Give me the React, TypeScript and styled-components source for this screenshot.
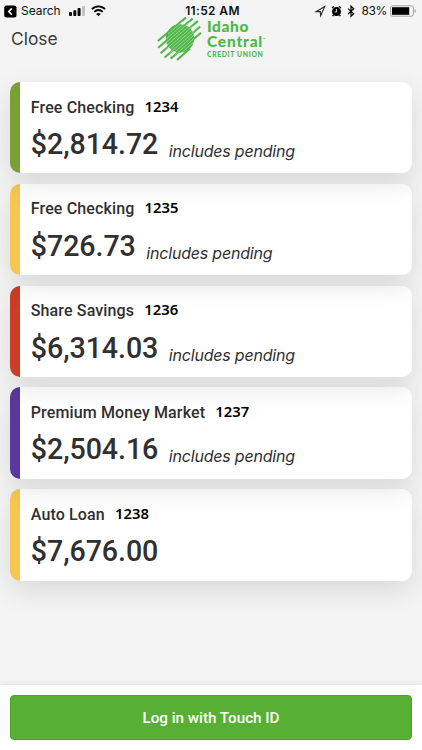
import React from 'react';
import styled, { createGlobalStyle } from 'styled-components';

const GlobalStyle = createGlobalStyle`
  * {
    box-sizing: border-box;
  }
  body {
    margin: 0;
    background: #f4f4f4;
    color: #303030;
    font-family: Roboto, sans-serif;
  }
`;

const Screen = styled.div`
  display: flex;
  flex-direction: column;
  width: 422px;
  height: 750px;
  overflow: hidden;
`;

const StatusBar = styled.div`
  display: grid;
  grid-template-columns: 1fr auto 1fr;
  align-items: center;
  height: 21px;
  padding: 1px 6px 0 4px;
  color: #111;
  font-family: Inter, sans-serif;
  font-size: 12px;
  line-height: 20px;
`;

const StatusGroup = styled.div<{ $end?: boolean }>`
  display: flex;
  align-items: center;
  justify-content: ${(p) => (p.$end ? 'flex-end' : 'flex-start')};
`;

const StatusText = styled.span<{ $left?: number; $spacing?: number }>`
  margin-left: ${(p) => p.$left || 0}px;
  letter-spacing: ${(p) => p.$spacing || 0}px;
`;

const Clock = styled.span`
  margin-left: 5px;
  font-weight: 600;
  letter-spacing: 0.35px;
`;

const Icon = styled.svg<{ $left?: number }>`
  display: block;
  flex: none;
  margin-left: ${(p) => p.$left || 0}px;
`;

const Header = styled.header`
  display: grid;
  grid-template-columns: 146px 118px 1fr;
  height: 61px;
  padding-left: 11px;
`;

const Close = styled.a`
  padding-top: 7px;
  color: #3c3c3c;
  font-family: Inter, sans-serif;
  font-size: 17.4px;
  line-height: 22px;
`;

const Logo = styled.div`
  display: flex;
  height: 48px;
  margin-top: -5px;
  color: #4db748;
`;

const Brand = styled.div`
  padding-top: 3px;
  margin-left: 5px;
  font-family: Lato, sans-serif;
  font-size: 15.5px;
  font-weight: 900;
  line-height: 14.5px;
  white-space: nowrap;
`;

const BrandLine = styled.div<{ $spacing: number }>`
  letter-spacing: ${(p) => p.$spacing}px;
`;

const Tagline = styled.div`
  margin-top: 2px;
  font-size: 6.8px;
  font-weight: 900;
  line-height: 9px;
  letter-spacing: 0.65px;
`;

const Mark = styled.sup`
  font-size: 3px;
  line-height: 0;
  vertical-align: 7px;
`;

const Accounts = styled.main`
  display: flex;
  flex: 1;
  flex-direction: column;
  gap: 10.4px;
  padding: 0 10.4px;
`;

// every card drops its shadow over the card below it
const Card = styled.section<{ $color: string; $level: number }>`
  position: relative;
  z-index: ${(p) => p.$level};
  display: flex;
  flex: none;
  height: 91.4px;
  border-radius: 10px;
  background: linear-gradient(to right, ${(p) => p.$color} 10.4px, #fff 10.4px);
  box-shadow: 0 10px 28px rgba(0, 0, 0, 0.11);
`;

const CardBody = styled.div`
  padding: 13.5px 0 0 20.4px;
`;

const Title = styled.div`
  display: flex;
  align-items: baseline;
  height: 22px;
  line-height: 22px;
`;

const Name = styled.span`
  font-size: 16px;
  font-weight: 500;
  letter-spacing: 0.13px;
`;

const AccountNumber = styled.span`
  position: relative;
  top: -1px;
  margin-left: 10.2px;
  color: #000;
  font-family: 'Noto Sans', sans-serif;
  font-size: 14.8px;
  font-weight: 600;
`;

const Balance = styled.div`
  display: flex;
  align-items: baseline;
  margin-top: 8.5px;
  line-height: 36px;
`;

const Amount = styled.span`
  font-size: 28.6px;
  font-weight: 500;
  letter-spacing: -0.07px;
`;

const Pending = styled.span`
  position: relative;
  top: 3px;
  margin-left: 10.6px;
  font-family: Inter, sans-serif;
  font-size: 16px;
  font-style: italic;
  letter-spacing: -0.2px;
`;

const Footer = styled.footer`
  position: relative;
  z-index: 10;
  height: 65px;
  padding: 10px 10.4px;
  background: #fff;
  box-shadow: 0 0 7px rgba(0, 0, 0, 0.1);
`;

const LoginButton = styled.button`
  display: block;
  width: 100%;
  height: 45px;
  padding: 0;
  border: 1px solid #4ca22d;
  border-radius: 4px;
  background: #57b033;
  color: #fff;
  font-family: Roboto, sans-serif;
  font-size: 15.2px;
  font-weight: 500;
`;

const accounts = [
  { name: 'Free Checking', number: '1234', amount: '$2,814.72', color: '#7a9f35', pending: true },
  { name: 'Free Checking', number: '1235', amount: '$726.73', color: '#f6c750', pending: true },
  { name: 'Share Savings', number: '1236', amount: '$6,314.03', color: '#cb3d27', pending: true },
  { name: 'Premium Money Market', number: '1237', amount: '$2,504.16', color: '#5a389d', pending: true },
  { name: 'Auto Loan', number: '1238', amount: '$7,676.00', color: '#f6c750', pending: false },
];

const LogoMark = () => (
  <Icon width="45" height="46" viewBox="157 16 45 46" fill="none" stroke="currentColor">
    <circle cx="180" cy="38.5" r="14.2" fill="currentColor" stroke="none" />
    <g strokeWidth="2.1">
      <path d="M157.8 41 L185.9 17.6" />
      <path d="M158.2 47.8 L192.6 18.6" />
      <path d="M160.6 53.3 L197.8 21" />
      <path d="M164.6 57.5 L200.2 26.5" />
      <path d="M170.6 58.6 L201 32.8" />
      <path d="M177 60 L190 48.5" />
    </g>
    <g stroke="#f4f4f4" strokeWidth="0.7" strokeOpacity="0.65">
      <path d="M168 34.2 L183 21.1" />
      <path d="M166 39.2 L187 21" />
      <path d="M166 42.6 L190 21.8" />
      <path d="M166 46 L192 23.4" />
      <path d="M166.5 49 L193 25.9" />
      <path d="M168 51 L194 28.4" />
      <path d="M169.5 53.1 L194.5 31.4" />
      <path d="M171 55.2 L195 34.2" />
      <path d="M175 55.1 L194.5 38.1" />
      <path d="M179 55 L194 41.9" />
    </g>
  </Icon>
);

const StatusIcons = () => (
  <Icon width="43" height="16" viewBox="314 2 43 16">
    <path d="M316 10.7 L324.6 5.6 L320.7 14.6 L320.2 10.6 Z" fill="none" stroke="#222" strokeWidth="1.1" />
    <circle cx="336.5" cy="10.6" r="4.5" fill="#000" />
    <path d="M332 7 L334 5.4 M341 7 L339 5.4 M333.5 14 L332.7 15.2 M339.5 14 L340.3 15.2" stroke="#000" strokeWidth="1.4" />
    <path d="M336.5 8 V10.9 H334.6" fill="none" stroke="#eee" strokeWidth="0.9" />
    <path d="M348.1 7.6 L353.7 12.8 L351 15.4 V5.2 L353.7 7.8 L348.1 13" fill="none" stroke="#000" strokeWidth="1.2" />
  </Icon>
);

export default class App extends React.Component {
  render() {
    return (
      <Screen>
        <GlobalStyle />
        <StatusBar>
          <StatusGroup>
            <Icon width="13" height="13" viewBox="0 0 13 13">
              <rect x="0.2" y="0.5" width="12.3" height="12" rx="2.5" fill="#000" />
              <path d="M7.8 3.4 L4.7 6.5 L7.8 9.6" fill="none" stroke="#fff" strokeWidth="1.5" />
            </Icon>
            <StatusText $left={4} $spacing={-0.05}>Search</StatusText>
            <Icon $left={8} width="17" height="12" viewBox="0 0 17 12">
              <rect x="0" y="7" width="3" height="4" rx="0.8" />
              <rect x="4.3" y="5.2" width="3" height="5.8" rx="0.8" />
              <rect x="8.6" y="3" width="3" height="8" rx="0.8" />
              <rect x="13" y="1" width="3" height="10" rx="0.8" fill="#c2c2c2" />
            </Icon>
            <Icon $left={5} width="15" height="12" viewBox="0 0 15 12" fill="none" stroke="#000" strokeWidth="1.9">
              <path d="M0.9 4.2 C4.5 0.4 10.5 0.4 14.1 4.2" />
              <path d="M3.3 6.8 C5.7 4.4 9.3 4.4 11.7 6.8" />
              <path d="M7.5 11.2 L5.2 8.9 C6.5 7.7 8.5 7.7 9.8 8.9 Z" fill="#000" stroke="none" />
            </Icon>
          </StatusGroup>
          <Clock>11:52 AM</Clock>
          <StatusGroup $end>
            <StatusIcons />
            <StatusText $left={5} $spacing={-0.4}>83%</StatusText>
            <Icon $left={3} width="26" height="12" viewBox="0 0 26 12">
              <rect x="0.6" y="0.8" width="22.8" height="10.4" rx="2" fill="none" stroke="#a2a2a2" />
              <rect x="2" y="2.2" width="17.2" height="7.6" fill="#000" />
              <path d="M24.5 4 C26.2 4.5 26.2 7.5 24.5 8 Z" fill="#a2a2a2" />
            </Icon>
          </StatusGroup>
        </StatusBar>
        <Header>
          <Close>Close</Close>
          <Logo>
            <LogoMark />
            <Brand>
              <BrandLine $spacing={0.6}>Idaho</BrandLine>
              <BrandLine $spacing={0.8}>Central<Mark>™</Mark></BrandLine>
              <Tagline>CREDIT UNION</Tagline>
            </Brand>
          </Logo>
        </Header>
        <Accounts>
          {accounts.map((a, i) => (
            <Card key={a.number} $color={a.color} $level={accounts.length - i}>
              <CardBody>
                <Title>
                  <Name>{a.name}</Name>
                  <AccountNumber>{a.number}</AccountNumber>
                </Title>
                <Balance>
                  <Amount>{a.amount}</Amount>
                  {a.pending && <Pending>includes pending</Pending>}
                </Balance>
              </CardBody>
            </Card>
          ))}
        </Accounts>
        <Footer>
          <LoginButton>Log in with Touch ID</LoginButton>
        </Footer>
      </Screen>
    );
  }
}
